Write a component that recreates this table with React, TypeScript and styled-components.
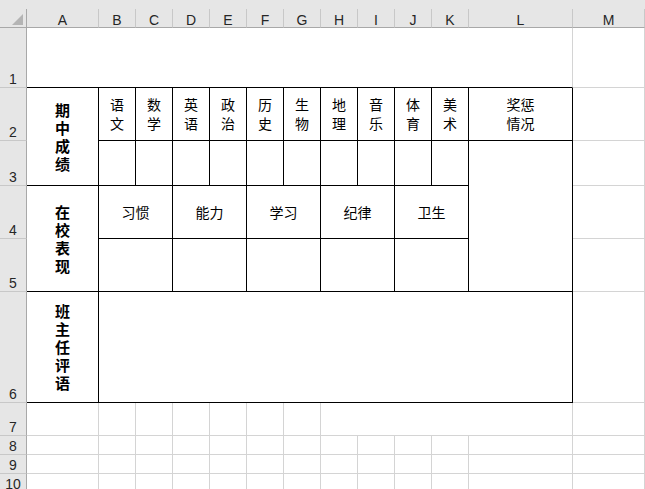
import React from "react";
import styled, { createGlobalStyle } from "styled-components";

const GlobalStyle = createGlobalStyle`
  html, body {
    margin: 0;
    padding: 0;
    overflow: hidden;
    background: #fff;
  }
  body {
    font-family: "Liberation Sans", "Noto Sans CJK SC", sans-serif;
  }
`;

type Line = "black" | "grid";

const Sheet = styled.div`
  width: 645px;
  height: 489px;
  overflow: hidden;
  background: #fff;
`;

const TopBand = styled.div`
  height: 9px;
  background: #e6e6e6;
`;

const Grid = styled.div`
  display: grid;
  grid-template-columns: 27px 72px repeat(10, 37px) 104px 72px;
  grid-template-rows: 19px 60px 53px 45px 53px 53px 111px 33px 19px 19px 19px;
`;

const Corner = styled.div`
  grid-column: 1;
  grid-row: 1;
  background: #e6e6e6;
  border-right: 1px solid #a8a8a8;
  border-bottom: 1px solid #a8a8a8;
  display: flex;
  align-items: flex-end;
  justify-content: flex-end;
  padding: 0 3px 2px 0;
`;

const ColHead = styled.div<{ $c: number }>`
  grid-column: ${(p) => p.$c};
  grid-row: 1;
  background: #e6e6e6;
  border-right: 1px solid #c8c8c8;
  border-bottom: 1px solid #a8a8a8;
  display: flex;
  align-items: flex-end;
  justify-content: center;
  font-size: 14px;
  line-height: 14px;
  color: #262626;
`;

const RowHead = styled.div<{ $r: number }>`
  grid-column: 1;
  grid-row: ${(p) => p.$r};
  background: #e6e6e6;
  border-right: 1px solid #a8a8a8;
  border-bottom: 1px solid #c8c8c8;
  display: flex;
  align-items: flex-end;
  justify-content: center;
  padding-bottom: 1px;
  font-size: 14px;
  line-height: 14px;
  color: #262626;
`;

const Cell = styled.div<{
  $c: number;
  $r: number;
  $cs?: number;
  $rs?: number;
  $right?: Line;
  $bottom?: Line;
  $bold?: boolean;
}>`
  grid-column: ${(p) => p.$c} / span ${(p) => p.$cs ?? 1};
  grid-row: ${(p) => p.$r} / span ${(p) => p.$rs ?? 1};
  border-right: 1px solid ${(p) => (p.$right === "black" ? "#000" : "#d4d4d4")};
  border-bottom: 1px solid ${(p) => (p.$bottom === "black" ? "#000" : "#d4d4d4")};
  display: flex;
  flex-direction: column;
  align-items: center;
  justify-content: center;
  text-align: center;
  font-family: "Noto Sans CJK SC", sans-serif;
  font-size: ${(p) => (p.$bold ? "15px" : "14px")};
  line-height: ${(p) => (p.$bold ? "18px" : "19px")};
  font-weight: ${(p) => (p.$bold ? 700 : 400)};
  color: #000;
`;

const Char = styled.span`
  display: block;
`;

const letters = ["A", "B", "C", "D", "E", "F", "G", "H", "I", "J", "K", "L", "M"];
const subjects = ["语文", "数学", "英语", "政治", "历史", "生物", "地理", "音乐", "体育", "美术"];
const habits = ["习惯", "能力", "学习", "纪律", "卫生"];

const Stack = ({ text }: { text: string }) => (
  <>
    {Array.from(text).map((ch, i) => (
      <Char key={i}>{ch}</Char>
    ))}
  </>
);

export default function App() {
  const blank: React.ReactNode[] = [];
  // rows 8-10: plain grid cells, A..M
  for (let r = 9; r <= 11; r++) {
    for (let c = 2; c <= 14; c++) {
      blank.push(<Cell key={`b${r}-${c}`} $c={c} $r={r} />);
    }
  }

  return (
    <Sheet>
      <GlobalStyle />
      <TopBand />
      <Grid>
        <Corner>
          <svg width="11" height="11" viewBox="0 0 11 11">
            <polygon points="11,0 11,11 0,11" fill="#b4b4b4" />
          </svg>
        </Corner>
        {letters.map((l, i) => (
          <ColHead key={l} $c={i + 2}>
            {l}
          </ColHead>
        ))}
        {Array.from({ length: 10 }, (_, i) => (
          <RowHead key={i} $r={i + 2}>
            {i + 1}
          </RowHead>
        ))}

        {/* row 1 */}
        <Cell $c={2} $r={2} $cs={12} $bottom="black" />
        <Cell $c={14} $r={2} />

        {/* row 2-3: 期中成绩 */}
        <Cell $c={2} $r={3} $rs={2} $right="black" $bottom="black" $bold>
          <Stack text="期中成绩" />
        </Cell>
        {subjects.map((s, i) => (
          <Cell key={s} $c={i + 3} $r={3} $right="black" $bottom="black">
            <Stack text={s} />
          </Cell>
        ))}
        <Cell $c={13} $r={3} $right="black" $bottom="black">
          <span>奖惩</span>
          <span>情况</span>
        </Cell>
        <Cell $c={14} $r={3} />
        {subjects.map((s, i) => (
          <Cell key={`e${s}`} $c={i + 3} $r={4} $right="black" $bottom="black" />
        ))}
        <Cell $c={13} $r={4} $rs={3} $right="black" $bottom="black" />
        <Cell $c={14} $r={4} />

        {/* row 4-5: 在校表现 */}
        <Cell $c={2} $r={5} $rs={2} $right="black" $bottom="black" $bold>
          <Stack text="在校表现" />
        </Cell>
        {habits.map((h, i) => (
          <Cell key={h} $c={3 + i * 2} $cs={2} $r={5} $right="black" $bottom="black">
            {h}
          </Cell>
        ))}
        <Cell $c={14} $r={5} />
        {habits.map((h, i) => (
          <Cell key={`e${h}`} $c={3 + i * 2} $cs={2} $r={6} $right="black" $bottom="black" />
        ))}
        <Cell $c={14} $r={6} />

        {/* row 6: 班主任评语 */}
        <Cell $c={2} $r={7} $right="black" $bottom="black" $bold>
          <Stack text="班主任评语" />
        </Cell>
        <Cell $c={3} $cs={11} $r={7} $right="black" $bottom="black" />
        <Cell $c={14} $r={7} />

        {/* row 7 */}
        {[2, 3, 4, 5, 6, 7, 8].map((c) => (
          <Cell key={`r7-${c}`} $c={c} $r={8} />
        ))}
        <Cell $c={9} $cs={5} $r={8} />
        <Cell $c={14} $r={8} />

        {blank}
      </Grid>
    </Sheet>
  );
}
